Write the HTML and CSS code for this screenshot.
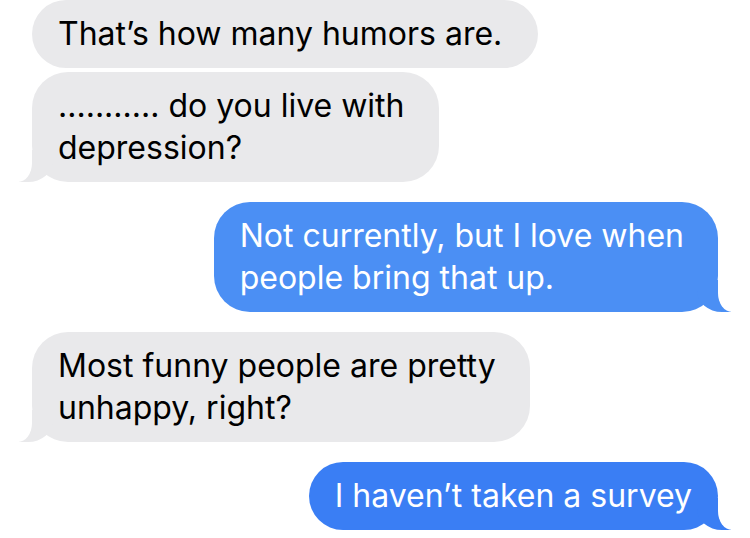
FILE: index.html
```html
<!DOCTYPE html>
<html lang="en">
<head>
<meta charset="utf-8">
<title>Messages</title>
<link rel="stylesheet" href="styles.css">
</head>
<body>
<main class="thread">
  <div class="bubble them wide">That’s how many humors are.</div>
  <div class="bubble them tail multi">........... do you live with<br>depression?</div>
  <div class="bubble me me-top tail multi">Not currently, but I love when<br>people bring that up.</div>
  <div class="bubble them tail multi">Most funny people are pretty<br>unhappy, right?</div>
  <div class="bubble me me-bottom tail">I haven’t taken a survey</div>
</main>
</body>
</html>
```
FILE: styles.css
```css
html, body {
  margin: 0;
  padding: 0;
  background: #ffffff;
}

body {
  width: 750px;
  height: 538px;
  overflow: hidden;
  font-family: "Inter", "Noto Sans", sans-serif;
}

.thread {
  display: flex;
  flex-direction: column;
  padding: 0 32px;
}

.bubble {
  position: relative;
  font-size: 32px;
  line-height: 42px;
  padding: 13px 26px;
  border-radius: 36px;
  white-space: nowrap;
  letter-spacing: 0;
  margin-top: 20px;
}

.bubble:first-child {
  margin-top: 0;
}

.them {
  align-self: flex-start;
  background: #e9e9eb;
  color: #000;
}

.them + .them {
  margin-top: 4px;
}

.me {
  align-self: flex-end;
  color: #fff;
}

.multi {
  padding-right: 34px;
}

.wide {
  padding-right: 36px;
}

.me-top {
  background: #4b8ff4;
}

.me-bottom {
  background: #3a7ef4;
}

.tail::before,
.tail::after {
  content: "";
  position: absolute;
  bottom: 0;
  height: 32px;
}

.them.tail::before {
  left: -13px;
  width: 34px;
  background: #e9e9eb;
  border-bottom-right-radius: 25px 21px;
}

.them.tail::after {
  left: -40px;
  width: 40px;
  background: #ffffff;
  border-bottom-right-radius: 14px 19px;
}

.me.tail::before {
  right: -13px;
  width: 34px;
  background: inherit;
  border-bottom-left-radius: 25px 21px;
}

.me.tail::after {
  right: -40px;
  width: 40px;
  background: #ffffff;
  border-bottom-left-radius: 14px 19px;
}
```
